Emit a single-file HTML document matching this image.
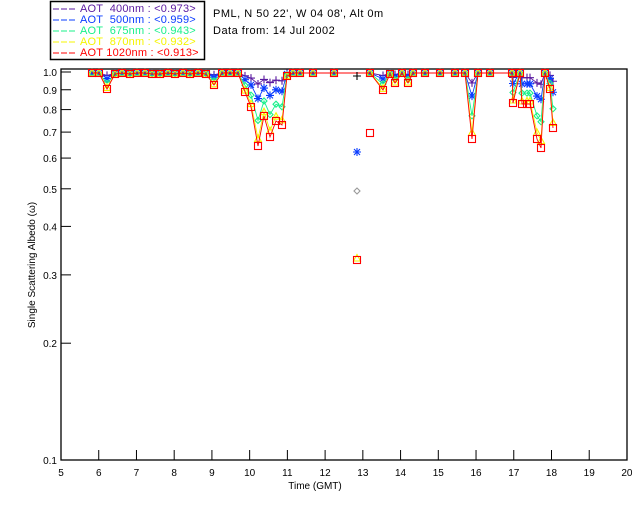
<!DOCTYPE html>
<html><head><style>
body{margin:0;background:#fff;width:640px;height:512px;overflow:hidden;font-family:"Liberation Sans",sans-serif}
svg text{font-family:"Liberation Sans",sans-serif;font-size:10px}
</style></head><body>
<svg id="s" width="640" height="512" xmlns="http://www.w3.org/2000/svg">
<rect x="0" y="0" width="640" height="512" fill="#fff"/>
<rect x="50.5" y="1.5" width="154" height="58" fill="none" stroke="#000" stroke-width="1.5"/>
<g style="font-size:11px;letter-spacing:0.2px">
<line x1="53" y1="9" x2="76" y2="9" stroke="#5a1aa0" stroke-dasharray="6,2"/><text x="80" y="12" fill="#5a1aa0" style="font-size:11px">AOT&#160;&#160;400nm : &lt;0.973&gt;</text>
<line x1="53" y1="20" x2="76" y2="20" stroke="#0a3cff" stroke-dasharray="6,2"/><text x="80" y="23" fill="#0a3cff" style="font-size:11px">AOT&#160;&#160;500nm : &lt;0.959&gt;</text>
<line x1="53" y1="31" x2="76" y2="31" stroke="#19f08a" stroke-dasharray="6,2"/><text x="80" y="34" fill="#19f08a" style="font-size:11px">AOT&#160;&#160;675nm : &lt;0.943&gt;</text>
<line x1="53" y1="42" x2="76" y2="42" stroke="#f5f500" stroke-dasharray="6,2"/><text x="80" y="45" fill="#f5f500" style="font-size:11px">AOT&#160;&#160;870nm : &lt;0.932&gt;</text>
<line x1="53" y1="53" x2="76" y2="53" stroke="#ff0000" stroke-dasharray="6,2"/><text x="80" y="56" fill="#ff0000" style="font-size:11px">AOT 1020nm : &lt;0.913&gt;</text>
<text x="213" y="17" style="font-size:11px;letter-spacing:0.5px">PML, N 50 22', W 04 08', Alt 0m</text>
<text x="213" y="34" style="font-size:11px;letter-spacing:0.5px">Data from: 14 Jul 2002</text>
</g>
<g id="ax" stroke="#000" fill="none"></g>
<g id="dat"></g>
<text x="315" y="489" text-anchor="middle">Time (GMT)</text>
<text transform="translate(35,265) rotate(-90)" text-anchor="middle" font-size="9">Single Scattering Albedo (ω)</text>
</svg>
<script>
const NS="http://www.w3.org/2000/svg";
const s=document.getElementById('s'),ax=document.getElementById('ax'),dat=document.getElementById('dat');
function el(t,a,p){const e=document.createElementNS(NS,t);for(const k in a)e.setAttribute(k,a[k]);(p||s).appendChild(e);return e;}
el('rect',{x:61,y:69,width:566,height:391,fill:'none',stroke:'#000','stroke-width':1.3},ax);
const Y=v=>72-Math.log10(v)*388;
[1,.9,.8,.7,.6,.5,.4,.3,.2,.1].forEach(v=>{const y=Y(v);if(v>0.1)el('line',{x1:61,y1:y,x2:71,y2:y},ax);
 el('text',{x:57,y:y+4,'text-anchor':'end'}).textContent=(v==1?'1.0':v==0.1?'0.1':v.toFixed(1));});
for(let h=5;h<=20;h++){const x=61+(h-5)*37.73;if(h>5&&h<20)el('line',{x1:x,y1:460,x2:x,y2:450},ax);
 el('text',{x:x,y:476,'text-anchor':'middle'}).textContent=h;}
const red=[[92,73],[99,73],[107,89],[115,74],[122,73],[130,74],[137,73],[145,73],[152,74],[160,74],[168,73],[175,74],[183,73],[190,74],[198,73],[206,74],[214,85],[222,73],[230,73],[238,73],[245,92],[251,107],[258,146],[264,116],[270,137],[276,121],[282,125],[287,76],[293,73],[300,73],[313,73],[334,73],[370,73],[383,90],[390,74],[395,83],[402,73],[408,83],[413,73],[425,73],[440,73],[455,73],[465,73],[472,139],[478,73],[490,73],[512,73],[513,103],[520,73],[522,104],[527,104],[530,104],[537,139],[541,148],[545,73],[550,89],[553,128]];
const ser=[['#5a1aa0',.15,'p'],['#0a3cff',.35,'a'],['#19f08a',.65,'d'],['#f5f500',.9,'t'],['#ff0000',1,'s']];
ser.forEach(([c,f,m])=>{const pts=red.map(([x,y])=>[x,73+(y-73)*f]);
 el('polyline',{points:pts.map(p=>p.join(',')).join(' '),fill:'none',stroke:c,'stroke-width':0.9},dat);
 pts.forEach(([x,y])=>mk(x,y,c,m));});
function mk(x,y,c,m){const g={fill:'none',stroke:c,'stroke-width':1.1};
 if(m=='s')el('rect',Object.assign({x:x-3.5,y:y-3.5,width:7,height:7},g),dat);
 else if(m=='t')el('polygon',Object.assign({points:`${x},${y-3.5} ${x-3.5},${y+3} ${x+3.5},${y+3}`},g),dat);
 else if(m=='d')el('polygon',Object.assign({points:`${x},${y-3} ${x+3},${y} ${x},${y+3} ${x-3},${y}`},g),dat);
 else if(m=='a')el('path',Object.assign({d:`M${x-4} ${y}H${x+4}M${x} ${y-4}V${y+4}M${x-3} ${y-3}L${x+3} ${y+3}M${x-3} ${y+3}L${x+3} ${y-3}`},g),dat);
 else el('path',Object.assign({d:`M${x-4} ${y}H${x+4}M${x} ${y-4}V${y+4}`},g),dat);}
mk(357,76,'#000','p');mk(357,152,'#0a3cff','a');mk(357,191,'#999','d');mk(357,258,'#f5f500','t');mk(357,260,'#ff0000','s');mk(370,133,'#ff0000','s');
</script>
</body></html>
